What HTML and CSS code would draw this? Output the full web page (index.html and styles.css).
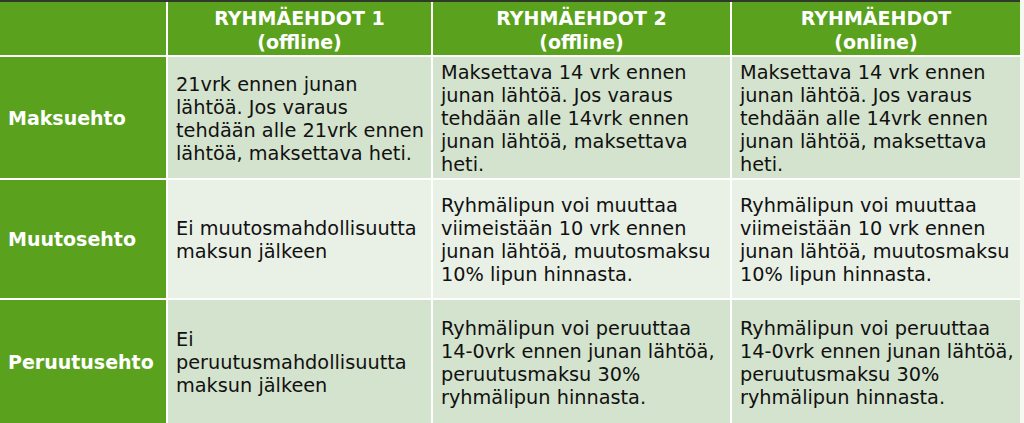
FILE: index.html
```html
<!DOCTYPE html>
<html lang="fi">
<head>
<meta charset="utf-8">
<link rel="stylesheet" href="styles.css">
</head>
<body>
<div class="table">
  <div class="cell head corner"></div>
  <div class="cell head">RYHMÄEHDOT 1<br>(offline)</div>
  <div class="cell head">RYHMÄEHDOT 2<br>(offline)</div>
  <div class="cell head">RYHMÄEHDOT<br>(online)</div>

  <div class="cell label">Maksuehto</div>
  <div class="cell body odd">21vrk ennen junan lähtöä. Jos varaus tehdään alle 21vrk ennen lähtöä, maksettava heti.</div>
  <div class="cell body odd">Maksettava 14 vrk ennen junan lähtöä. Jos varaus tehdään alle 14vrk ennen junan lähtöä, maksettava heti.</div>
  <div class="cell body odd">Maksettava 14 vrk ennen junan lähtöä. Jos varaus tehdään alle 14vrk ennen junan lähtöä, maksettava heti.</div>

  <div class="cell label">Muutosehto</div>
  <div class="cell body even">Ei muutosmahdollisuutta maksun jälkeen</div>
  <div class="cell body even">Ryhmälipun voi muuttaa viimeistään 10 vrk ennen junan lähtöä, muutosmaksu 10% lipun hinnasta.</div>
  <div class="cell body even">Ryhmälipun voi muuttaa viimeistään 10 vrk ennen junan lähtöä, muutosmaksu 10% lipun hinnasta.</div>

  <div class="cell label">Peruutusehto</div>
  <div class="cell body odd">Ei peruutusmahdollisuutta maksun jälkeen</div>
  <div class="cell body odd">Ryhmälipun voi peruuttaa 14-0vrk ennen junan lähtöä, peruutusmaksu 30% ryhmälipun hinnasta.</div>
  <div class="cell body odd">Ryhmälipun voi peruuttaa 14-0vrk ennen junan lähtöä, peruutusmaksu 30% ryhmälipun hinnasta.</div>
</div>
</body>
</html>
```

FILE: styles.css
```css
html, body {
  margin: 0;
  padding: 0;
  background: #f4f8f1;
}
body {
  width: 1024px;
  height: 423px;
  overflow: hidden;
  font-family: "DejaVu Sans", Verdana, sans-serif;
}
.table {
  width: 1020px;
  display: grid;
  grid-template-columns: 166px 263px 297px 288px;
  grid-template-rows: 53px 121px 118px 123px;
  gap: 2px;
  background: #ffffff;
  border-top: 2px solid #2f3a2a;
}
.cell {
  display: flex;
  align-items: center;
}
.head {
  background: #5aa21d;
  color: #ffffff;
  font-weight: bold;
  font-size: 19px;
  line-height: 24px;
  padding-top: 2px;
  justify-content: center;
  text-align: center;
}
.label {
  background: #5aa21d;
  color: #ffffff;
  font-weight: bold;
  font-size: 19px;
  padding-left: 8px;
}
.body {
  color: #111111;
  font-size: 19.3px;
  line-height: 23px;
  padding: 2px 2px 0 8px;
}
.odd {
  background: #d4e3cd;
}
.even {
  background: #e9f0e6;
}
```
